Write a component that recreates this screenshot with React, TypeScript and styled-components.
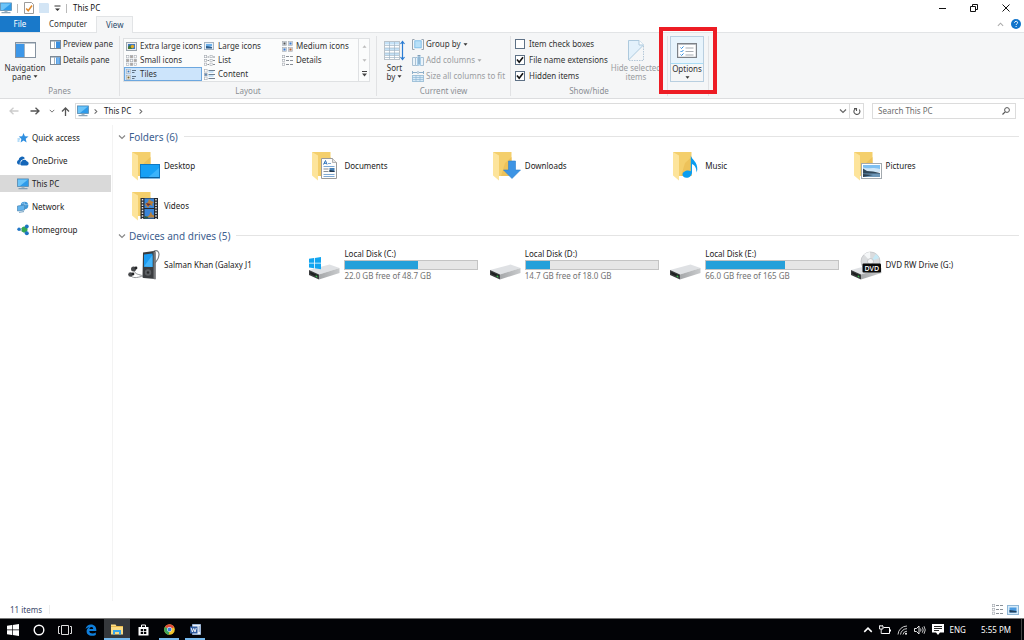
import React from "react";
import styled, { createGlobalStyle, css } from "styled-components";

const GlobalStyle = createGlobalStyle`
  *, *::before, *::after { box-sizing: border-box; }
  body { margin: 0; background: #fff; }
  body, button, input {
    font-family: "Noto Sans", "Open Sans", sans-serif;
    font-size: 8px;
    line-height: 10px;
    color: #2b2b2b;
  }
  button { margin: 0; padding: 0; border: 0; background: none; cursor: default; }
  svg { display: block; flex: none; }
  ul { list-style: none; margin: 0; padding: 0; }
  h2 { margin: 0; }
`;

/* ---------- layout ---------- */

const Window = styled.div`
  display: flex;
  flex-direction: column;
  min-height: 100vh;
`;

const TitleBar = styled.header`
  display: flex;
  align-items: center;
  height: 16px;
  padding-right: 2px;
`;

const Spacer = styled.div`
  flex: 1;
`;

const QuickTools = styled.div`
  display: flex;
  align-items: center;
  gap: 5px;
  height: 16px;
`;

const Separator = styled.span`
  width: 1px;
  height: 9px;
  margin-right: 1px;
  background: #b9b9b9;
`;

const WindowTitle = styled.span`
  color: #111;
`;

const WindowButton = styled.button`
  display: grid;
  place-items: center;
  width: 32px;
  height: 15px;
`;

const TabBar = styled.nav`
  display: flex;
  align-items: stretch;
  height: 17px;
  border-bottom: 1px solid #e2e4e6;
`;

const Tab = styled.button<{ $kind?: "file" | "active" }>`
  padding: 0 9px;
  height: 16px;
  color: #333;
  ${(p) =>
    p.$kind === "file" &&
    css`
      width: 40px;
      background: #1979ca;
      color: #fff;
    `}
  ${(p) =>
    p.$kind === "active" &&
    css`
      height: 17px;
      border: 1px solid #e2e4e6;
      border-bottom: 0;
      background: #f5f6f7;
      color: #2a4a6a;
    `}
`;

const TabTools = styled.div`
  display: flex;
  align-items: center;
  gap: 7px;
  padding-right: 3px;
`;

const Ribbon = styled.section`
  display: flex;
  height: 66px;
  padding: 3px 0 2px;
  background: #f5f6f7;
  border-bottom: 1px solid #dcdddf;
`;

const Group = styled.section<{ $width: number }>`
  display: flex;
  flex-direction: column;
  width: ${(p) => p.$width}px;
  border-right: 1px solid #e1e2e4;
`;

const GroupBody = styled.div`
  display: flex;
  height: 50px;
`;

const GroupLabel = styled.div`
  text-align: center;
  color: #8b8f94;
`;

const BigButton = styled.button<{ $width: number; $muted?: boolean }>`
  display: flex;
  flex-direction: column;
  align-items: center;
  width: ${(p) => p.$width}px;
  flex: none;
  padding-top: 3px;
  color: ${(p) => (p.$muted ? "#9a9da1" : "#333")};
  line-height: 9px;
  white-space: nowrap;
`;

const BigIcon = styled.span`
  display: grid;
  place-items: center;
  height: 22px;
  margin-bottom: 2px;
`;

const Stack = styled.div`
  display: flex;
  flex-direction: column;
`;

const SmallButton = styled.button<{ $muted?: boolean }>`
  display: flex;
  align-items: center;
  gap: 2px;
  height: 16px;
  white-space: nowrap;
  color: ${(p) => (p.$muted ? "#9a9da1" : "#333")};
`;

const Gallery = styled.div`
  display: flex;
  height: 44px;
  margin: 2px 0 0 3px;
  border: 1px solid #dfe1e3;
  background: #fbfcfc;
`;

const GalleryGrid = styled.div`
  display: grid;
  grid-template-columns: repeat(3, 78px);
  grid-auto-rows: 14px;
`;

const GalleryItem = styled.button<{ $on?: boolean }>`
  display: flex;
  align-items: center;
  gap: 3px;
  padding-left: 1px;
  white-space: nowrap;
  color: #333;
  border: 1px solid ${(p) => (p.$on ? "#6ca7df" : "transparent")};
  background: ${(p) => (p.$on ? "#cce4fb" : "transparent")};
`;

const GalleryScroll = styled.div`
  display: grid;
  grid-auto-rows: 14px;
  width: 11px;
  border-left: 1px solid #dfe1e3;
`;

const ScrollButton = styled.button`
  display: grid;
  place-items: center;
`;

const CheckRow = styled.label`
  display: flex;
  align-items: center;
  gap: 4px;
  height: 16px;
  white-space: nowrap;
  color: #333;
`;

const CheckCell = styled.span`
  display: grid;
  place-items: center;
  > * { grid-area: 1 / 1; }
  > svg { pointer-events: none; }
  > input:not(:checked) + svg { visibility: hidden; }
`;

const CheckInput = styled.input`
  appearance: none;
  width: 10px;
  height: 10px;
  margin: 0;
  background: #fff;
  border: 1px solid #5e7186;
`;

const OptionsGroup = styled.div`
  position: relative;
  width: 41px;
  border-right: 1px solid #e1e2e4;
`;

const Highlight = styled.span`
  position: absolute;
  inset: -9px -9px 2px -9px;
  border: 4px solid #ed1c24;
  pointer-events: none;
`;

const OptionsButton = styled.button`
  display: flex;
  flex-direction: column;
  align-items: center;
  width: 34px;
  height: 46px;
  margin: 0 2px;
  border: 1px solid #b9cfe0;
  color: #333;
`;

const OptionsTop = styled.span`
  display: grid;
  place-items: center;
  width: 32px;
  height: 27px;
  background: #e8f4fc;
  border-bottom: 1px solid #a8dcf5;
`;

const OptionsArrow = styled.span`
  padding-top: 2px;
`;

const NavBar = styled.div`
  display: flex;
  align-items: center;
  padding: 4px 8px 6px 7px;
`;

const NavButton = styled.button<{ $width: number }>`
  display: grid;
  place-items: center;
  width: ${(p) => p.$width}px;
  height: 16px;
`;

const AddressBox = styled.div`
  display: flex;
  flex: 1;
  align-items: center;
  gap: 3px;
  height: 16px;
  margin-right: 8px;
  padding-left: 1px;
  border: 1px solid #dcdcdc;
`;

const Crumb = styled.button`
  padding: 0 3px 0 2px;
  color: #222;
`;

const AddressTools = styled.div`
  display: flex;
  align-items: center;
`;

const AddressTool = styled.button<{ $divided?: boolean }>`
  display: grid;
  place-items: center;
  width: 14px;
  height: 14px;
  border-left: 1px solid ${(p) => (p.$divided ? "#dcdcdc" : "transparent")};
`;

const SearchBox = styled.label`
  display: flex;
  align-items: center;
  width: 144px;
  height: 16px;
  padding: 0 5px;
  border: 1px solid #dcdcdc;
`;

const SearchInput = styled.input`
  flex: 1;
  min-width: 0;
  padding: 0;
  border: 0;
  outline: 0;
  background: none;
  &::placeholder { color: #6d6d6d; opacity: 1; }
`;

const Body = styled.div`
  display: flex;
  flex: 1;
`;

const Sidebar = styled.nav`
  width: 113px;
  padding-top: 4px;
  border-right: 1px solid #f3f3f3;
`;

const SideList = styled.ul`
  display: flex;
  flex-direction: column;
  gap: 6px;
`;

const SideLink = styled.a<{ $on?: boolean }>`
  display: flex;
  align-items: center;
  gap: 3px;
  height: 17px;
  margin-right: 1px;
  padding-left: 17px;
  color: #222;
  text-decoration: none;
  background: ${(p) => (p.$on ? "#d9d9d9" : "transparent")};
`;

const Main = styled.main`
  flex: 1;
  min-width: 0;
  padding: 2px 0 0 5px;
`;

const SectionHead = styled.h2`
  display: flex;
  align-items: center;
  gap: 3px;
  height: 19px;
  margin-right: 5px;
  font-size: 10px;
  font-weight: 400;
  line-height: 14px;
  color: #3d608f;
  &::after {
    content: "";
    flex: 1;
    height: 1px;
    margin-left: 3px;
    background: #e4e4e4;
  }
`;

const TileGrid = styled.ul`
  display: grid;
  grid-template-columns: repeat(5, 1fr);
  grid-auto-rows: 40px;
  padding-left: 4px;
`;

const Tile = styled.button`
  display: flex;
  align-items: center;
  gap: 2px;
  width: 100%;
  height: 40px;
  padding-left: 6px;
  text-align: left;
  white-space: nowrap;
  color: #222;
`;

const DriveInfo = styled.span`
  display: block;
  width: 134px;
`;

const Usage = styled.span`
  display: block;
  height: 10px;
  margin: 1px 0;
  border: 1px solid #c4c4c4;
  background: #e6e6e6;
`;

const UsageFill = styled.span`
  display: block;
  height: 8px;
  background: #26a0da;
`;

const Free = styled.span`
  color: #737373;
`;

const StatusBar = styled.footer`
  display: flex;
  align-items: center;
  height: 17px;
  padding: 0 5px 0 10px;
  gap: 4px;
  color: #3c4a6b;
`;

const StatusLine = styled.span`
  width: 1px;
  height: 9px;
  margin-left: 3px;
  background: #ececec;
`;

const Taskbar = styled.div`
  display: flex;
  align-items: stretch;
  height: 22px;
  border-top: 1px solid #777;
  background: #020306;
`;

const TaskButton = styled.button<{ $active?: boolean; $running?: boolean }>`
  display: grid;
  place-items: center;
  width: 26px;
  background: ${(p) => (p.$active ? "#35383c" : "transparent")};
  ${(p) =>
    (p.$active || p.$running) &&
    css`
      &::after {
        content: "";
        align-self: end;
        width: ${p.$active ? 26 : 20}px;
        height: 2px;
        background: #76b9ed;
      }
    `}
  > *, &::after { grid-area: 1 / 1; }
`;

const Tray = styled.div`
  display: flex;
  align-items: center;
  gap: 6px;
  margin-right: 2px;
  padding-right: 10px;
  border-right: 1px solid #444;
  color: #fff;
`;

const Clock = styled.time`
  padding-left: 9px;
`;

/* ---------- small glyphs ---------- */

const Caret = ({ color = "#333" }: { color?: string }) => (
  <svg width="5" height="3" viewBox="0 0 5 3"><path d="M0.500 0.300h4L2.500 2.700z" fill={color} /></svg>
);

const InlineRow = styled.span`
  display: flex;
  align-items: center;
  gap: 2px;
`;

const Chevron = ({ dir, color = "#666", size = 7 }: { dir: "up" | "down" | "right"; color?: string; size?: number }) => {
  const d = { up: "M1 5.500L4 2.500L7 5.500", down: "M1 2.500L4 5.500L7 2.500", right: "M3 1.500L5.500 4L3 6.500" }[dir];
  return (
    <svg width={size} height={size} viewBox="0 0 8 8"><path d={d} fill="none" stroke={color} strokeWidth="1.200" /></svg>
  );
};

const PcIcon = () => (
  <svg width="12" height="12" viewBox="0 0 12 12">
    <rect x="0.400" y="0.900" width="11.200" height="7.700" fill="#2e9bea" stroke="#5d88a8" strokeWidth="0.700" />
    <path d="M1 1.500h10L3 8H1z" fill="#6cc4f8" />
    <path d="M4.500 8.800h3v1.200h-3z" fill="#9fb3c2" />
    <path d="M1.500 10.200h9v1h-9z" fill="#6f8fa8" />
  </svg>
);

const BackArrow = ({ color, flip }: { color: string; flip?: boolean }) => (
  <svg width="10" height="8" viewBox="0 0 10 8">
    <path d={flip ? "M0.500 4H9M5.500 0.700L9 4L5.500 7.300" : "M9.500 4H1M4.500 0.700L1 4L4.500 7.300"} fill="none" stroke={color} strokeWidth="1.300" />
  </svg>
);

const PaneIcon = ({ side }: { side: "preview" | "details" }) => (
  <svg width="11" height="9" viewBox="0 0 11 9">
    <rect x="0.500" y="0.500" width="10" height="8" fill="#fff" stroke="#7d8a97" />
    <path d="M0 0h11v1.500H0z" fill="#7d8a97" />
    <path d="M4.500 1v7" stroke="#a4b2be" />
    <path d="M6 1.500h4v6.500H6z" fill="#3a8fe0" />
    {side === "details" && <path d="M6.500 3h3M6.500 5h3M6.500 7h3" stroke="#d5ebff" strokeWidth="0.800" />}
  </svg>
);

const NavPaneIcon = () => (
  <svg width="21" height="16" viewBox="0 0 21 16">
    <rect x="0.500" y="0.500" width="20" height="15" fill="#fff" stroke="#8592a0" />
    <path d="M1 1h19v1H1z" fill="#c3ccd4" />
    <path d="M1 2h8v13H1z" fill="#3d97e8" />
    <path d="M9.500 2v13" stroke="#9fb3c5" />
  </svg>
);

const LayoutIcon = ({ kind }: { kind: string }) => {
  const dots = (xs: number[], ys: number[], s: number, fills: string[]) =>
    xs.flatMap((x, i) =>
      ys.map((y, j) => (
        <rect key={`${x}-${y}`} x={x} y={y} width={s} height={s} fill={fills[(i + j) % fills.length]} stroke="#a3a9b0" strokeWidth="0.600" />
      ))
    );
  return (
    <svg width="11" height="11" viewBox="0 0 11 11">
      {kind === "xl" && (
        <g>
          <rect x="0.500" y="1.500" width="10" height="8" fill="#e9edf1" stroke="#9aa4ae" />
          <path d="M2 3h7v5H2z" fill="#3d78c2" />
          <path d="M2 6l2-2 2 4H2z" fill="#4a7a35" />
          <circle cx="6.500" cy="5.500" r="1.700" fill="#e2ab28" />
        </g>
      )}
      {kind === "large" && (
        <g>
          <rect x="0.500" y="1.500" width="9" height="7" fill="#e9f2fa" stroke="#a7b4c0" />
          <path d="M2 3h6v2L2 7z" fill="#6db0ea" />
          <path d="M2 5l6 1v1.500H2z" fill="#2d5c8a" />
        </g>
      )}
      {kind === "medium" && dots([0.5, 6.3], [0.5, 6.3], 4, ["#dce5ee", "#dce5ee"])}
      {kind === "medium" && (
        <g>
          <path d="M1.500 1.500h2v2h-2z" fill="#555" /><path d="M7.500 1.500h2v2h-2z" fill="#3a7ad0" />
          <path d="M1.500 7.500h2v2h-2z" fill="#3a7ad0" /><path d="M7.500 7.500h2v2h-2z" fill="#c0632e" />
        </g>
      )}
      {kind === "small" && dots([0.5, 4.3, 8.1], [0.5, 4.3, 8.1], 2.4, ["#fff", "#b2a59b"])}
      {(kind === "list" || kind === "details") && (
        <g>
          {dots([0.5], [0.5, 4.3, 8.1], 2.2, ["#fff"])}
          {kind === "list" && dots([6], [0.5, 4.3, 8.1], 2.2, ["#fff"])}
          <path d={kind === "list" ? "M3.500 2h1.500M3.500 5.500h1.500M3.500 9.500h1.500M9 2h2M9 5.500h2M9 9.500h2" : "M4 1.500h3M8 1.500h3M4 5.500h3M8 5.500h3M4 9.500h3M8 9.500h3"} stroke="#8a9097" />
        </g>
      )}
      {kind === "tiles" && (
        <g>
          {dots([0.5], [0.5, 6.3], 4, ["#fff"])}
          <path d="M1.500 1.500h2v2h-2z" fill="#3c7cc0" /><path d="M1.500 7.500h2v2h-2z" fill="#77642b" />
          <path d="M6 1.500h4M6 3.500h2.500M6 7.500h4M6 9.500h2.500" stroke="#5f7285" />
        </g>
      )}
      {kind === "content" && (
        <g>
          {dots([0.5], [0.5, 4.3, 8.1], 2.6, ["#fff", "#5a88b8"])}
          <path d="M4.500 1.500H11M4.500 5.500H11M4.500 9.500H11" stroke="#6f7f90" />
          <path d="M4.500 3h5M4.500 7h5" stroke="#7ebcf0" strokeWidth="0.800" />
        </g>
      )}
    </svg>
  );
};

const SortIcon = () => (
  <svg width="21" height="21" viewBox="0 0 21 21">
    <rect x="0.500" y="1.500" width="15" height="18" fill="#fff" stroke="#b9c2ca" />
    <path d="M1 2h14v2.500H1zM1 8h14v2H1zM1 13h14v2H1z" fill="#c5e2f7" />
    <path d="M1 5.500h14M1 8h14M1 10.500h14M1 13h14M1 15.500h14M1 17.500h14M5.500 2v17M10.500 2v17" stroke="#9fb4c6" strokeWidth="0.700" />
    <path d="M18.500 2v17M16.500 4l2-2.500 2 2.500M16.500 17l2 2.500 2-2.500" fill="none" stroke="#2b7cd3" strokeWidth="1.200" />
  </svg>
);

const GroupByIcon = () => (
  <svg width="12" height="11" viewBox="0 0 12 11">
    <path d="M2.500 0.500h-2v10h2M9.500 0.500h2v10h-2" fill="none" stroke="#98a4af" />
    <rect x="2.800" y="1.800" width="6.400" height="7" fill="#b8e0f8" stroke="#73b7e6" strokeWidth="0.800" />
  </svg>
);

const AddColumnsIcon = () => (
  <svg width="12" height="11" viewBox="0 0 12 11">
    <path d="M0.500 2.500h3v8h-3zM3.500 2.500h3v8h-3zM8.500 2.500h3v8h-3z" fill="#eaf3fa" stroke="#a9c0d2" />
    <path d="M5 1.500h4v9H5z" fill="#a9cfea" />
    <path d="M7 0v9M5.500 0.500h3" stroke="#6e93b0" strokeWidth="0.800" />
  </svg>
);

const SizeColumnsIcon = () => (
  <svg width="12" height="11" viewBox="0 0 12 11">
    <path d="M0.500 0v3M11.500 0v3M6 0v3M1 1.500h4M7 1.500h4" stroke="#8fb0ca" />
    <rect x="0.500" y="4.500" width="11" height="6" fill="#d8eaf7" stroke="#a3c3da" />
    <path d="M0.500 6.500h11M0.500 8.500h11M4 4.500v6M8 4.500v6" stroke="#8fb8d6" strokeWidth="0.700" />
  </svg>
);

const HideIcon = () => (
  <svg width="16" height="21" viewBox="0 0 16 21">
    <path d="M0.500 20V0.500h10.500l4.500 4.500L0.500 20z" fill="#e3f1fb" stroke="#adc9dd" />
    <path d="M11 0.500V5h4.500" fill="#fff" stroke="#adc9dd" />
    <path d="M15.500 6v14.500H1" fill="none" stroke="#b5c8d8" strokeDasharray="1.500 1" />
  </svg>
);

const OptionsIcon = () => (
  <svg width="20" height="15" viewBox="0 0 20 15">
    <rect x="0.600" y="0.600" width="18.800" height="13.800" fill="#fff" stroke="#7d8288" strokeWidth="1.200" />
    <path d="M1 1h18v1H1z" fill="#b9bdc2" />
    <path d="M3.500 4.500l1 1L6.500 3.500M3.500 8l1 1L6.500 7M3.500 11.500l1 1L6.500 10.500" fill="none" stroke="#2b8be0" />
    <path d="M8.500 5h8M8.500 8.500h8M8.500 12h8" stroke="#a7adb3" />
  </svg>
);

/* ---------- sidebar icons ---------- */

const StarIcon = () => (
  <svg width="12" height="12" viewBox="0 0 12 12">
    <path d="M6.500 1l1.400 3.200 3.600.2-2.800 2.300.9 3.700-3-1.900-3 2 .8-3.600L1.800 4.600l3.400-.3z" fill="#2f8fe0" />
    <path d="M0.500 7h2.500M0.500 9h2" stroke="#6bbaf2" />
  </svg>
);
const CloudIcon = () => (
  <svg width="12" height="12" viewBox="0 0 12 12">
    <path d="M1.500 9.500a2.400 2.400 0 0 1 .1-4.500A3.500 3.500 0 0 1 8 3.200L4 5.500 3 9.500z" fill="#1466b8" />
    <path d="M4.500 10.500a2.200 2.200 0 0 1-.2-4.200A3 3 0 0 1 9.800 6.200a2.200 2.200 0 0 1 .2 4.300z" fill="#1466b8" />
    <path d="M3.200 9.500C2.800 7.500 3.500 6.200 5 5.600 6 4 8 3.800 9.300 5" fill="none" stroke="#fff" strokeWidth="0.600" />
  </svg>
);
const NetworkIcon = () => (
  <svg width="12" height="12" viewBox="0 0 12 12">
    <circle cx="7.500" cy="4.500" r="3.800" fill="#3f96d6" />
    <path d="M5 2.500c2 0 3 2 6 1M7 1c1 2 1 5 0 7" stroke="#9fd0f2" fill="none" strokeWidth="0.700" />
    <path d="M0.500 5l7-1v5l-7 1z" fill="#62b4ee" stroke="#4c86b3" strokeWidth="0.700" />
    <path d="M2 11.300l5-.7" stroke="#6f9dbf" />
  </svg>
);
const HomegroupIcon = () => (
  <svg width="12" height="12" viewBox="0 0 12 12">
    <path d="M2 5.500L9 3M2 5.500l7 4" stroke="#8aa9bd" strokeWidth="0.800" />
    <circle cx="2" cy="5.300" r="1.700" fill="#2378c8" />
    <circle cx="7.500" cy="5.500" r="3" fill="#34a853" />
    <circle cx="9.800" cy="2.500" r="1.900" fill="#1c73c4" />
    <circle cx="9.800" cy="9.300" r="2" fill="#1c73c4" />
  </svg>
);

/* ---------- tile icons ---------- */

const FolderIcon = ({ kind }: { kind: string }) => (
  <svg width="34" height="34" viewBox="0 0 34 34">
    <path d="M4 3h18.500v24H9z" fill="#f4cf6c" />
    <path d="M16 14l6.500-6v19H12z" fill="#edc25a" />
    <path d="M4 3l6 3.500V31.500L4 26.500z" fill="#fde49b" />
    {kind === "desktop" && (
      <g>
        <rect x="12.500" y="15.500" width="19" height="13.500" fill="#17a0f5" stroke="#1079c4" />
        <path d="M31 19v9.500H20z" fill="#3bb3fb" />
        <path d="M12.500 28.500h19" stroke="#0d5f9c" />
      </g>
    )}
    {kind === "documents" && (
      <g>
        <path d="M13.500 9.500h11l4 4v16h-15z" fill="#fdfdfd" stroke="#9a9a9a" />
        <path d="M24.500 9.500v4h4" fill="#e5e5e5" stroke="#9a9a9a" strokeWidth="0.700" />
        <path d="M15.500 15.500l2-4 1.500 4M16 14.300h2.500" stroke="#2f72ba" fill="none" />
        <path d="M20 14.500h3M15.500 17.500h11M15.500 25.500h11M15.500 27.500h11" stroke="#6f9fcf" strokeWidth="0.900" />
        <path d="M15.500 20h5M15.500 22.500h5" stroke="#8a8f96" />
        <path d="M21.500 19h5v4h-5z" fill="#447fb5" /><path d="M21.500 21l5 1v1h-5z" fill="#25384c" />
      </g>
    )}
    {kind === "downloads" && (
      <path d="M19.500 12h7v9h5L23 29.500 14.500 21h5z" fill="#3d94e4" stroke="#2c7fce" strokeWidth="0.600" />
    )}
    {kind === "music" && (
      <path d="M21.800 6.500c1 4.500 7 6 6.500 14.500l-1 2.500c.5-5-2-7.500-4.300-8.500v8.500c0 3-2.500 5.300-5.500 5.300-2.500 0-4-1.300-4-3.200 0-2.300 2.700-4 5.500-4 1 0 2 .2 2.800.6z" fill="#0a9df0" />
    )}
    {kind === "pictures" && (
      <g>
        <rect x="11.500" y="14.500" width="20" height="15" fill="#fff" stroke="#a3a9ae" />
        <path d="M13 16h17v7H13z" fill="#7fc0f2" /><path d="M13 18.500c5 2 8-1 17 1.500V23H13z" fill="#cfe6f7" />
        <path d="M13 19.500l4 2.500 6 .5 7 1.500v1H13z" fill="#31485a" />
        <path d="M13 24.500h17V28H13z" fill="#6d97b8" /><path d="M13 25l10 1-10 2z" fill="#2e4253" />
      </g>
    )}
    {kind === "videos" && (
      <g>
        <path d="M12.500 9h17.500v21H12.500z" fill="#26292e" />
        <path d="M16.500 9.500h9.500v9.500h-9.500zM16.500 20h9.500v9.500h-9.500z" fill="#3b85d8" />
        <path d="M17 15l3-2 1-3 2 2 3 1-2 2 1 2-3-1-2 3z" fill="#b9803a" />
        <path d="M18 14l5 1-3 2z" fill="#6b2c3c" />
        <path d="M18 28.500l3-2 2-4 1 3 2 1v2h-7z" fill="#b9803a" /><path d="M16.500 27l4 1-1 1.500h-3z" fill="#2f5a3c" />
        <path d="M14.500 10v20M28 10v20" stroke="#e6e6e6" strokeWidth="1.500" strokeDasharray="1.500 1.200" />
      </g>
    )}
  </svg>
);

const DriveIcon = ({ kind }: { kind?: "windows" | "dvd" }) => (
  <svg width="34" height="34" viewBox="0 0 34 34">
    <defs>
      <linearGradient id="drive-side" x1="0" x2="1"><stop offset="0" stopColor="#a5a7a9" /><stop offset="1" stopColor="#c9cbcd" /></linearGradient>
    </defs>
    {kind === "dvd" && (
      <g>
        <circle cx="20.500" cy="13.500" r="9.500" fill="#dadcde" stroke="#b9bcbf" strokeWidth="0.700" />
        <path d="M20.500 13.500L14 6.500a9.500 9.500 0 0 1 6-2.500z" fill="#f5f7f8" />
        <path d="M20.500 13.500L26 6a9.500 9.500 0 0 1 3 4z" fill="#c6e9f6" />
        <circle cx="20.500" cy="13.500" r="3" fill="#f3f4f5" stroke="#b4b7ba" strokeWidth="0.700" />
      </g>
    )}
    <path d="M1 22L21.500 16.500 31.500 20 11 26.500z" fill="#dfe1e4" />
    <path d="M11 26.500L31.500 20v5L11 31.500z" fill="url(#drive-side)" />
    <path d="M1 22l10 4.500v5L1 27z" fill="#3a3c3e" />
    <path d="M2.300 24l7.500 3.300v2L2.300 26z" fill="#1b1c1d" />
    <path d="M7.700 27.300l1.600.7v1.400l-1.600-.7z" fill="#37c24c" />
    {kind === "windows" && (
      <path d="M1 10.800l5-.8v4.700H1zM6.800 9.900l6.200-1v5.800H6.800zM1 15.500h5v4.700l-5-.8zM6.800 15.500H13v5.800l-6.200-1z" fill="#12a5f0" />
    )}
    {kind === "dvd" && (
      <g>
        <rect x="12.500" y="15.500" width="18.500" height="9" rx="1" fill="#0b0b0b" />
        <text x="21.800" y="22.500" textAnchor="middle" fontFamily="Open Sans, sans-serif" fontSize="7" fontWeight="600" fill="#fff">DVD</text>
      </g>
    )}
  </svg>
);

const PlayerIcon = () => (
  <svg width="34" height="34" viewBox="0 0 34 34">
    <path d="M25 6c0-4 6-5 6 .5S28 13 27 15" fill="none" stroke="#7e8286" strokeWidth="1.200" />
    <path d="M15 4.500l11-1.500c1 0 1.500.5 1.500 1.500v26.500L15.500 30c-.8 0-1-.5-1-1.200z" fill="#3a3c3f" />
    <path d="M25.500 3l2 1.500v27l-2-.5z" fill="#77797c" />
    <path d="M16 6.500l8.500-1v13.500l-8.500-.3z" fill="#1c9cf2" /><path d="M16 18.500L24.500 7v12z" fill="#45b5fa" />
    <circle cx="20" cy="24.500" r="3.200" fill="#5c5f63" /><circle cx="20" cy="24.500" r="1.200" fill="#2a2b2d" />
    <path d="M6 22c1 5 5 4 9 6M3 28c3 3 8 1 12 0" fill="none" stroke="#86898c" strokeWidth="0.900" />
    <circle cx="5.500" cy="21" r="2.500" fill="#46484b" /><circle cx="8" cy="20" r="1.400" fill="#242527" />
    <circle cx="2.500" cy="26.500" r="2.300" fill="#46484b" /><circle cx="5" cy="26" r="1.400" fill="#242527" />
  </svg>
);

/* ---------- data ---------- */

const views: [string, string][] = [
  ["xl", "Extra large icons"], ["large", "Large icons"], ["medium", "Medium icons"],
  ["small", "Small icons"], ["list", "List"], ["details", "Details"],
  ["tiles", "Tiles"], ["content", "Content"],
];

const places = [
  { name: "Quick access", icon: <StarIcon /> },
  { name: "OneDrive", icon: <CloudIcon /> },
  { name: "This PC", icon: <PcIcon />, on: true },
  { name: "Network", icon: <NetworkIcon /> },
  { name: "Homegroup", icon: <HomegroupIcon /> },
];

const folders = ["Desktop", "Documents", "Downloads", "Music", "Pictures", "Videos"];

const drives = [
  { name: "Local Disk (C:)", free: "22.0 GB free of 48.7 GB", used: 55, windows: true },
  { name: "Local Disk (D:)", free: "14.7 GB free of 18.0 GB", used: 18 },
  { name: "Local Disk (E:)", free: "66.0 GB free of 165 GB", used: 60 },
];

/* ---------- page ---------- */

const Check = ({ label, checked }: { label: string; checked?: boolean }) => (
  <CheckRow>
    <CheckCell>
      <CheckInput type="checkbox" defaultChecked={checked} />
      <svg width="8" height="8" viewBox="0 0 8 8"><path d="M1 3.500L3.200 6.200L7 1.200" fill="none" stroke="#111" strokeWidth="1.600" /></svg>
    </CheckCell>
    {label}
  </CheckRow>
);

const CheckList = styled(Stack)`
  width: 92px;
  padding-left: 4px;
`;

export default function App() {
  return (
    <Window>
      <GlobalStyle />
      <TitleBar>
        <QuickTools>
          <PcIcon />
          <Separator />
          <svg width="10" height="12" viewBox="0 0 10 12">
            <path d="M0.500 0.500h7l2 2v9h-9z" fill="#fff" stroke="#9b9b9b" />
            <path d="M2.200 6.500l2 2.200L8 3.500" fill="none" stroke="#e08a2c" strokeWidth="1.500" />
          </svg>
          <svg width="10" height="12" viewBox="0 0 10 12"><path d="M0 1h9l1 1v9H0z" fill="#d3e5f5" /></svg>
          <svg width="7" height="7" viewBox="0 0 7 7"><path d="M0.500 1h6" stroke="#333" /><path d="M1 3.500h5L3.500 6z" fill="#333" /></svg>
          <Separator />
          <WindowTitle>This PC</WindowTitle>
        </QuickTools>
        <Spacer />
        <WindowButton aria-label="Minimize">
          <svg width="7" height="7" viewBox="0 0 7 7"><path d="M0 3.500h7" stroke="#111" /></svg>
        </WindowButton>
        <WindowButton aria-label="Restore">
          <svg width="8" height="8" viewBox="0 0 8 8"><path d="M0.500 2.500h5v5h-5zM2.500 2.500v-2h5v5h-2" fill="none" stroke="#111" /></svg>
        </WindowButton>
        <WindowButton aria-label="Close">
          <svg width="8" height="8" viewBox="0 0 8 8"><path d="M0.500 0.500l7 7M7.500 0.500l-7 7" stroke="#111" /></svg>
        </WindowButton>
      </TitleBar>
      <TabBar>
        <Tab $kind="file">File</Tab>
        <Tab>Computer</Tab>
        <Tab $kind="active">View</Tab>
        <Spacer />
        <TabTools>
          <Chevron dir="up" color="#aaa" />
          <svg width="10" height="10" viewBox="0 0 10 10">
            <circle cx="5" cy="5" r="5" fill="#0f73cb" />
            <path d="M3.500 3.800C3.500 1.800 6.700 1.900 6.600 3.700C6.500 4.800 5.100 4.900 5.100 6" fill="none" stroke="#fff" strokeWidth="1" />
            <path d="M4.600 7h1v1h-1z" fill="#fff" />
          </svg>
        </TabTools>
      </TabBar>
      <Ribbon>
        <Group $width={120}>
          <GroupBody>
            <BigButton $width={50}>
              <BigIcon><NavPaneIcon /></BigIcon>
              Navigation
              <InlineRow>pane <Caret /></InlineRow>
            </BigButton>
            <Stack>
              <SmallButton><PaneIcon side="preview" />Preview pane</SmallButton>
              <SmallButton><PaneIcon side="details" />Details pane</SmallButton>
            </Stack>
          </GroupBody>
          <GroupLabel>Panes</GroupLabel>
        </Group>
        <Group $width={257}>
          <GroupBody>
            <Gallery>
              <GalleryGrid>
                {views.map(([kind, name]) => (
                  <GalleryItem key={kind} $on={kind === "tiles"}><LayoutIcon kind={kind} />{name}</GalleryItem>
                ))}
              </GalleryGrid>
              <GalleryScroll>
                <ScrollButton aria-label="Previous row"><svg width="5" height="3" viewBox="0 0 5 3"><path d="M0.500 2.700h4L2.500 0.300z" fill="#bbb" /></svg></ScrollButton>
                <ScrollButton aria-label="Next row"><Caret color="#bbb" /></ScrollButton>
                <ScrollButton aria-label="More"><svg width="5" height="6" viewBox="0 0 5 6"><path d="M0 0.500h5" stroke="#444" /><path d="M0 2.500h5L2.500 5.500z" fill="#444" /></svg></ScrollButton>
              </GalleryScroll>
            </Gallery>
          </GroupBody>
          <GroupLabel>Layout</GroupLabel>
        </Group>
        <Group $width={134}>
          <GroupBody>
            <BigButton $width={35}>
              <BigIcon><SortIcon /></BigIcon>
              Sort
              <InlineRow>by <Caret /></InlineRow>
            </BigButton>
            <Stack>
              <SmallButton><GroupByIcon />Group by <Caret /></SmallButton>
              <SmallButton $muted><AddColumnsIcon />Add columns <Caret color="#aaa" /></SmallButton>
              <SmallButton $muted><SizeColumnsIcon />Size all columns to fit</SmallButton>
            </Stack>
          </GroupBody>
          <GroupLabel>Current view</GroupLabel>
        </Group>
        <Group $width={157}>
          <GroupBody>
            <CheckList>
              <Check label="Item check boxes" />
              <Check label="File name extensions" checked />
              <Check label="Hidden items" checked />
            </CheckList>
            <BigButton $width={66} $muted>
              <BigIcon><HideIcon /></BigIcon>
              <span>Hide selected</span>
              <span>items</span>
            </BigButton>
          </GroupBody>
          <GroupLabel>Show/hide</GroupLabel>
        </Group>
        <OptionsGroup>
          <OptionsButton>
            <OptionsTop><OptionsIcon /></OptionsTop>
            Options
            <OptionsArrow><Caret /></OptionsArrow>
          </OptionsButton>
          <Highlight />
        </OptionsGroup>
      </Ribbon>
      <NavBar>
        <NavButton $width={14} aria-label="Back"><BackArrow color="#ccc" /></NavButton>
        <NavButton $width={28} aria-label="Forward"><BackArrow color="#555" flip /></NavButton>
        <NavButton $width={6} aria-label="Recent"><Chevron dir="down" size={6} /></NavButton>
        <NavButton $width={20} aria-label="Up">
          <svg width="9" height="9" viewBox="0 0 9 9"><path d="M4.500 9V1M1 4.500L4.500 1L8 4.500" fill="none" stroke="#555" strokeWidth="1.300" /></svg>
        </NavButton>
        <AddressBox>
          <PcIcon />
          <Chevron dir="right" size={7} />
          <Crumb>This PC</Crumb>
          <Chevron dir="right" size={7} />
          <Spacer />
          <AddressTools>
            <AddressTool aria-label="History"><Chevron dir="down" size={8} /></AddressTool>
            <AddressTool $divided aria-label="Refresh">
              <svg width="8" height="8" viewBox="0 0 8 8"><path d="M6.200 2.500A3 3 0 1 1 2.500 1.800M1 1.500h2.500v2.500" fill="none" stroke="#555" strokeWidth="1.100" /></svg>
            </AddressTool>
          </AddressTools>
        </AddressBox>
        <SearchBox>
          <SearchInput type="text" aria-label="Search This PC" placeholder="Search This PC" />
          <svg width="8" height="8" viewBox="0 0 8 8"><circle cx="5" cy="3" r="2.400" fill="none" stroke="#555" /><path d="M3.200 4.800L0.500 7.500" stroke="#555" strokeWidth="1.200" /></svg>
        </SearchBox>
      </NavBar>
      <Body>
        <Sidebar>
          <SideList>
            {places.map((p) => (
              <li key={p.name}><SideLink href="#" $on={p.on}>{p.icon}{p.name}</SideLink></li>
            ))}
          </SideList>
        </Sidebar>
        <Main>
          <SectionHead><Chevron dir="down" size={8} color="#888" />Folders (6)</SectionHead>
          <TileGrid>
            {folders.map((f) => (
              <li key={f}><Tile><FolderIcon kind={f.toLowerCase()} />{f}</Tile></li>
            ))}
          </TileGrid>
          <SectionHead><Chevron dir="down" size={8} color="#888" />Devices and drives (5)</SectionHead>
          <TileGrid>
            <li><Tile><PlayerIcon />Salman Khan (Galaxy J1</Tile></li>
            {drives.map((d) => (
              <li key={d.name}>
                <Tile>
                  <DriveIcon kind={d.windows ? "windows" : undefined} />
                  <DriveInfo>
                    {d.name}
                    <Usage><UsageFill style={{ width: `${d.used}%` }} /></Usage>
                    <Free>{d.free}</Free>
                  </DriveInfo>
                </Tile>
              </li>
            ))}
            <li><Tile><DriveIcon kind="dvd" />DVD RW Drive (G:)</Tile></li>
          </TileGrid>
        </Main>
      </Body>
      <StatusBar>
        11 items
        <StatusLine />
        <Spacer />
        <LayoutIcon kind="details" />
        <svg width="12" height="10" viewBox="0 0 12 10">
          <rect x="0.500" y="0.500" width="11" height="9" fill="#d6ebfa" stroke="#8fb7d6" />
          <path d="M2.500 2.500h7v5h-7z" fill="#4a9ae0" /><path d="M2.500 5l7 1v1.500h-7z" fill="#23425e" />
        </svg>
      </StatusBar>
      <Taskbar>
        <TaskButton aria-label="Start">
          <svg width="12" height="12" viewBox="0 0 12 12"><path d="M0 1.700l5-.7v4.600H0zM5.700.9L12 0v5.600H5.700zM0 6.300h5V11l-5-.7zM5.700 6.300H12V12l-6.300-.9z" fill="#fff" /></svg>
        </TaskButton>
        <TaskButton aria-label="Cortana">
          <svg width="12" height="12" viewBox="0 0 12 12"><circle cx="6" cy="6" r="4.800" fill="none" stroke="#fff" strokeWidth="1.400" /></svg>
        </TaskButton>
        <TaskButton aria-label="Task view">
          <svg width="14" height="10" viewBox="0 0 14 10"><path d="M3.500 0.500h7v9h-7zM2 1.500H0.500v7H2M12 1.500h1.500v7H12" fill="none" stroke="#ddd" /></svg>
        </TaskButton>
        <TaskButton aria-label="Edge">
          <svg width="12" height="12" viewBox="0 0 12 12"><path d="M0.500 5.300C1 2.300 3.200.5 6 .5c3.300 0 5.300 2.300 5.300 5.200v1.200H4.300c.1 1.800 1.500 2.500 3.200 2.500 1.200 0 2.300-.3 3.300-.9v2.400c-1.100.6-2.400.9-3.900.9-3.200 0-5.300-1.700-5.300-4.500 0-1.900 1.100-3.400 2.800-4.100C2.500 3.500 1.200 4.200.5 5.300zM4.400 4.900h3.800c0-1.200-.5-2-1.800-2-1.100 0-1.800.8-2 2z" fill="#0f7fdb" /></svg>
        </TaskButton>
        <TaskButton $active aria-label="File Explorer">
          <svg width="12" height="11" viewBox="0 0 12 11"><path d="M0 0.500h4.500l1 1.500H12v8.500H0z" fill="#fbdc84" /><path d="M0 2h12v1H0z" fill="#e8b84c" /><path d="M2 6h8v4.500H8V8H4v2.500H2z" fill="#38a5ea" /></svg>
        </TaskButton>
        <TaskButton aria-label="Store">
          <svg width="11" height="12" viewBox="0 0 11 12"><path d="M0.500 3h10v8.500h-10z" fill="#fff" /><path d="M3.500 3.500v-2.500h4v2.500" fill="none" stroke="#fff" /><path d="M2.700 5h2.400v2.200H2.700zM5.900 5h2.400v2.200H5.900zM2.700 7.900h2.400V10H2.700zM5.900 7.900h2.400V10H5.900z" fill="#020306" /></svg>
        </TaskButton>
        <TaskButton $running aria-label="Chrome">
          <svg width="11" height="11" viewBox="0 0 11 11">
            <circle cx="5.500" cy="5.500" r="5.300" fill="#f3c42b" />
            <path d="M5.500 5.500L.9 2.900A5.300 5.300 0 0 1 10.200 3.200z" fill="#de4b3b" />
            <path d="M5.500 5.500L.9 2.900a5.300 5.300 0 0 0 4 7.900z" fill="#3ba55b" />
            <circle cx="5.500" cy="5.500" r="2.400" fill="#fff" /><circle cx="5.500" cy="5.500" r="1.900" fill="#3f7fe0" />
          </svg>
        </TaskButton>
        <TaskButton $running aria-label="Word">
          <svg width="11" height="12" viewBox="0 0 11 12"><path d="M2.500 0.500h8v10h-8z" fill="#e9f0f8" stroke="#9db6d6" /><path d="M0 2.500h7.500v7H0z" fill="#2f5b9f" /><path d="M1.200 4l1.200 4L3.700 4.500 5 8l1.200-4" fill="none" stroke="#fff" strokeWidth="0.900" /><path d="M8.500 3h1.500M8.500 5h1.500M8.500 7h1.500" stroke="#5d7fb2" /></svg>
        </TaskButton>
        <Spacer />
        <Tray>
          <Chevron dir="up" color="#fff" size={10} />
          <svg width="12" height="10" viewBox="0 0 12 10"><path d="M4.500 2.500h6v6h-6M3.500 8.500h2M11.500 4.500v2" fill="none" stroke="#fff" /><path d="M0.500 1h3.500v3H.5zM2.200 4v4.500h2M1 0v1M3.200 0v1" fill="none" stroke="#fff" strokeWidth="0.900" /></svg>
          <svg width="11" height="10" viewBox="0 0 11 10"><path d="M1 9.500A9 9 0 0 1 10 1M3.500 9.500A6.500 6.500 0 0 1 10 3.700M6 9.500a4 4 0 0 1 4-3.300" fill="none" stroke="#ccc" /><circle cx="9" cy="8.800" r="1" fill="#fff" /></svg>
          <svg width="12" height="10" viewBox="0 0 12 10"><path d="M0.500 3.500h2L5 1v8L2.500 6.500h-2z" fill="none" stroke="#fff" strokeWidth="0.900" /><path d="M6.500 3.500q1 1.500 0 3M8.300 2.300q1.800 2.700 0 5.400M10 1.200q2.500 3.800 0 7.600" fill="none" stroke="#ddd" strokeWidth="0.900" /></svg>
          <svg width="12" height="11" viewBox="0 0 12 11"><path d="M0 0h12v8.500H8L6 11 4 8.500H0z" fill="#fff" /><path d="M2 2.500h8M2 4.500h8M2 6.500h5" stroke="#111" strokeWidth="0.900" /></svg>
          <span>ENG</span>
          <Clock>5:55 PM</Clock>
        </Tray>
      </Taskbar>
    </Window>
  );
}
